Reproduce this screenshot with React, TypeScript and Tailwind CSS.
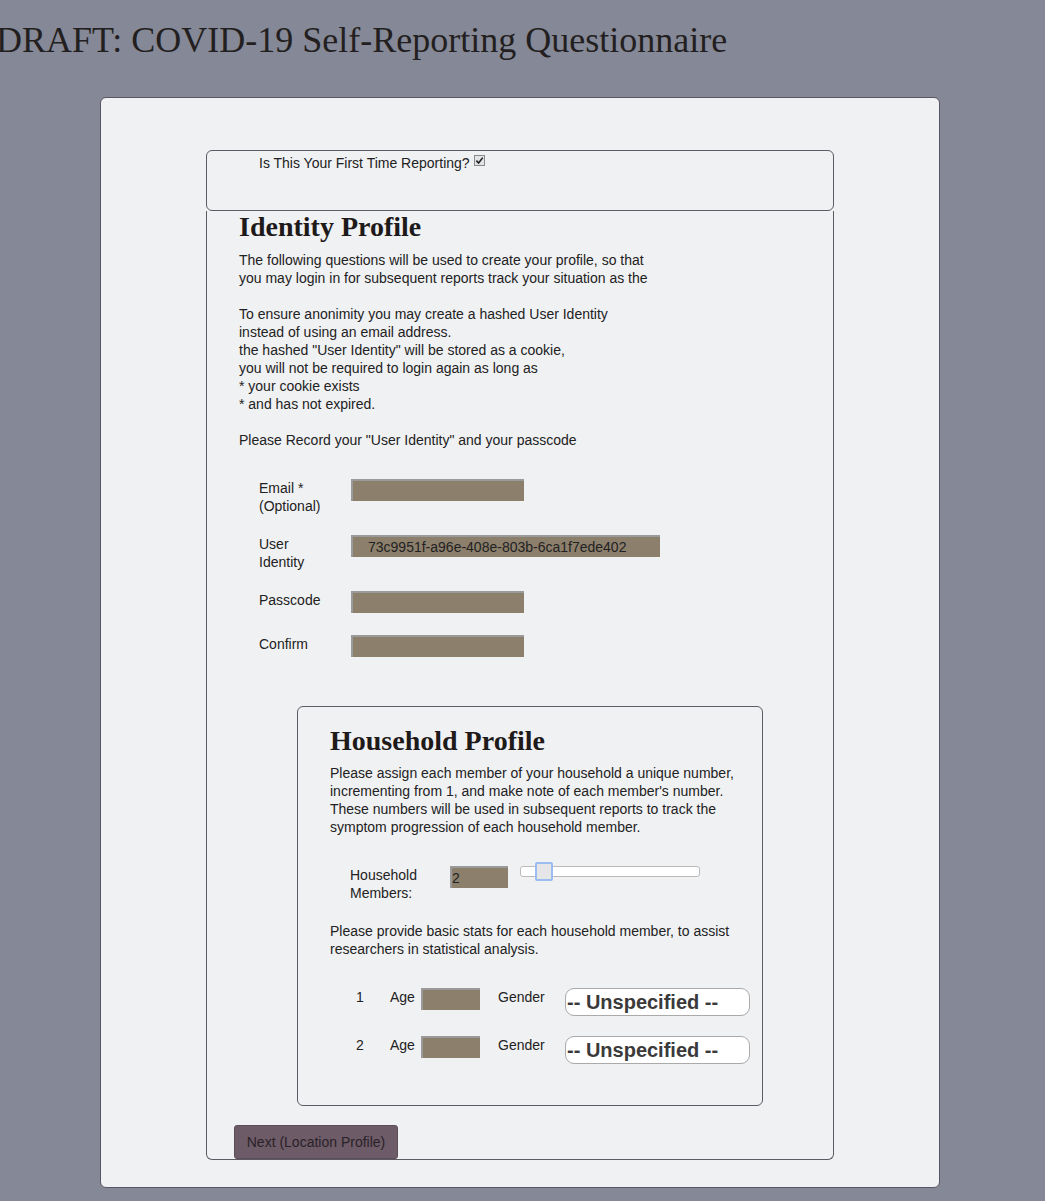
const sans = { fontFamily: '"Liberation Sans", Arial, sans-serif' }
const serif = { fontFamily: '"Liberation Serif", "Times New Roman", serif' }

function Field({ w, value, pl }: { w: string; value?: string; pl?: string }) {
    return (
        <div className={`${w} ${pl ?? "pl-0"} h-[22px] border-t-2 border-l-2 border-[#9a9a9a] bg-[#8c7f6c] text-[14px] leading-[20px] text-[#222]`}>
            {value}
        </div>
    )
}

function MemberRow({ n, last }: { n: number; last?: boolean }) {
    return (
        <div className={`flex items-start ${last ? "" : "mb-[20px]"}`}>
            <div className="w-[60px] pl-[26px] leading-[18px]">{n}</div>
            <div className="w-[31px] leading-[18px]">Age</div>
            <Field w="w-[59px]" />
            <div className="ml-[18px] w-[67px] leading-[18px]">Gender</div>
            <div className="w-[185px] h-[28px] rounded-[9px] border border-[#aaa] bg-white pl-[1px] text-[20px] font-bold leading-[26px] text-[#3a3a3a]">
                -- Unspecified --
            </div>
        </div>
    )
}

export default function App() {
    return (
        <div className="min-h-screen bg-[#858896] pb-[14px] text-[#222]" style={sans}>
            {/* Page title */}
            <h1 className="ml-[-4px] pt-[20px] text-[36px] leading-[41px] text-[#231f20]" style={serif}>
                DRAFT: COVID-19 Self-Reporting Questionnaire
            </h1>

            {/* Card */}
            <div className="ml-[100px] mt-[36px] w-[840px] rounded-[6px] border border-[#5a5560] bg-[#f0f1f3] pt-[52px] pb-[27px] text-[14px]">
                <div className="ml-[105px] w-[628px]">
                    {/* First time box */}
                    <div className="h-[61px] rounded-[6px] border border-[#5e5a63] pl-[52px] pt-[3px] leading-[18px]">
                        <span className="inline-flex items-center gap-[4px]">
                            Is This Your First Time Reporting?
                            <span className="inline-flex h-[11px] w-[11px] items-center justify-center border border-[#8a8a8a] bg-[#e4e4e4] mt-[-6px]">
                                <svg viewBox="0 0 10 10" className="h-[9px] w-[9px]">
                                    <path d="M1.5 5.2 L4 7.8 L8.6 1.8" fill="none" stroke="#222" strokeWidth="1.8" />
                                </svg>
                            </span>
                        </span>
                    </div>

                    {/* Identity profile */}
                    <div className="rounded-b-[6px] border-x border-b border-[#5e5a63] pl-[32px]">
                        <h2 className="text-[28px] font-bold leading-[31px] text-[#1e1a1a]" style={serif}>
                            Identity Profile
                        </h2>
                        <p className="mt-[9px] leading-[18px]">
                            The following questions will be used to create your profile, so that<br />
                            you may login in for subsequent reports track your situation as the<br />
                            <br />
                            To ensure anonimity you may create a hashed User Identity<br />
                            instead of using an email address.<br />
                            the hashed "User Identity" will be stored as a cookie,<br />
                            you will not be required to login again as long as<br />
                            * your cookie exists<br />
                            * and has not expired.<br />
                            <br />
                            Please Record your "User Identity" and your passcode
                        </p>

                        <div className="mt-[30px] pl-[20px] leading-[18px]">
                            <div className="mb-[20px] flex items-start">
                                <div className="w-[92px]">Email *<br />(Optional)</div>
                                <Field w="w-[173px]" />
                            </div>
                            <div className="mb-[20px] flex items-start">
                                <div className="w-[92px]">User<br />Identity</div>
                                <Field w="w-[309px]" pl="pl-[15px]" value="73c9951f-a96e-408e-803b-6ca1f7ede402" />
                            </div>
                            <div className="mb-[22px] flex items-start">
                                <div className="w-[92px]">Passcode</div>
                                <Field w="w-[173px]" />
                            </div>
                            <div className="flex items-start">
                                <div className="w-[92px]">Confirm</div>
                                <Field w="w-[173px]" />
                            </div>
                        </div>

                        {/* Household profile */}
                        <div className="ml-[58px] mt-[49px] w-[466px] rounded-[6px] border border-[#5e5a63] pl-[32px] pt-[18px] pb-[41px]">
                            <h2 className="text-[28px] font-bold leading-[31px] text-[#1e1a1a]" style={serif}>
                                Household Profile
                            </h2>
                            <p className="mt-[8px] leading-[18px]">
                                Please assign each member of your household a unique number,<br />
                                incrementing from 1, and make note of each member's number.<br />
                                These numbers will be used in subsequent reports to track the<br />
                                symptom progression of each household member.
                            </p>

                            <div className="mt-[30px] flex items-start pl-[20px] leading-[18px]">
                                <div className="w-[100px]">Household<br />Members:</div>
                                <Field w="w-[58px]" value="2" />
                                <div className="relative ml-[12px] h-[11px] w-[180px] rounded-[3px] border border-[#bbb] bg-white">
                                    <div className="absolute left-[14px] top-[-5px] h-[19px] w-[18px] rounded-[2px] border-2 border-[#9bbcf0] bg-[#e6e6e8]" />
                                </div>
                            </div>

                            <p className="mt-[20px] leading-[18px]">
                                Please provide basic stats for each household member, to assist<br />
                                researchers in statistical analysis.
                            </p>

                            <div className="mt-[30px]">
                                <MemberRow n={1} />
                                <MemberRow n={2} last />
                            </div>
                        </div>

                        <button className="ml-[-5px] mt-[19px] block h-[34px] w-[164px] rounded-[3px] border border-[#5c4d58] bg-[#6d5b67] text-[14px] text-[#2a2228]">
                            Next (Location Profile)
                        </button>
                    </div>
                </div>
            </div>
        </div>
    )
}
